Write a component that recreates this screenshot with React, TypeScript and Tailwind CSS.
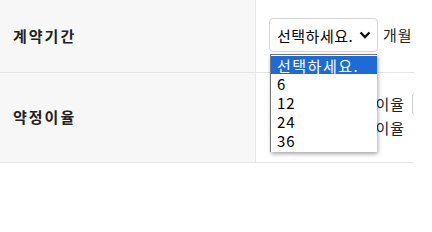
import React from "react";

const options = ["선택하세요.", "6", "12", "24", "36"];

export default function App() {
  const font = { fontFamily: '"Noto Sans CJK KR", "Noto Sans", sans-serif' };

  return (
    <div className="w-[432px] h-[232px] bg-white" style={font}>
      <div className="w-[414px] overflow-hidden relative">
        {/* 계약기간 row */}
        <div className="flex border-b border-[#e5e5e5]">
          <div className="w-[256px] shrink-0 bg-[#f7f7f7] border-r border-[#e8e8e8] flex items-center pl-[13px]">
            <span className="text-[15px] font-bold text-[#222] tracking-[2px]">계약기간</span>
          </div>
          <div className="flex-1 flex items-center pl-[13px] pt-[18px] pb-[20px] relative">
            <div className="w-[109px] h-[34px] shrink-0 border border-[#d4d4d4] rounded-[4px] flex items-center justify-between pl-[7px] pr-[6px] bg-white">
              <span className="text-[15px] text-black leading-none tracking-[0.5px] whitespace-nowrap">선택하세요.</span>
              <svg width="12" height="8" viewBox="0 0 12 8" className="shrink-0">
                <path d="M1.5 1.5 L6 6 L10.5 1.5" fill="none" stroke="#111" strokeWidth="2.4" />
              </svg>
            </div>
            <span className="ml-[5px] text-[15px] text-[#222] tracking-[1px] whitespace-nowrap">개월</span>

            {/* open dropdown list */}
            <div className="absolute left-[14px] top-[54px] w-[107px] z-10 bg-white border-l border-t border-[#777] shadow-[1px_2px_4px_rgba(0,0,0,0.35)] pb-[2px]">
              {options.map((o, i) => (
                <div
                  key={o}
                  className={
                    i === 0
                      ? "h-[18px] mt-[1px] flex items-center pl-[6px] text-[15px] leading-none tracking-[1.5px] whitespace-nowrap bg-[#1c6bd6] text-white"
                      : "h-[19px] flex items-center pl-[6px] text-[15px] leading-none tracking-[1px] text-black"
                  }
                >
                  {o}
                </div>
              ))}
            </div>
          </div>
        </div>

        {/* 약정이율 row */}
        <div className="flex border-b border-[#e5e5e5]">
          <div className="w-[256px] shrink-0 bg-[#f7f7f7] border-r border-[#e8e8e8] flex items-center pl-[13px]">
            <span className="text-[15px] font-bold text-[#222] tracking-[2px]">약정이율</span>
          </div>
          <div className="flex-1 pl-[13px] pt-[20px] pb-[23px] flex flex-col gap-[2px]">
            <div className="flex items-center h-[22px]">
              <span className="w-[136px] shrink-0 text-right text-[15px] text-[#222] tracking-[1px] whitespace-nowrap">기본이율</span>
              <div className="ml-[7px] w-[80px] h-[22px] border border-[#ccc] rounded-[3px] shrink-0" />
            </div>
            <div className="flex items-center h-[22px]">
              <span className="w-[136px] shrink-0 text-right text-[15px] text-[#222] tracking-[1px] whitespace-nowrap">우대이율</span>
            </div>
          </div>
        </div>
      </div>
    </div>
  );
}
